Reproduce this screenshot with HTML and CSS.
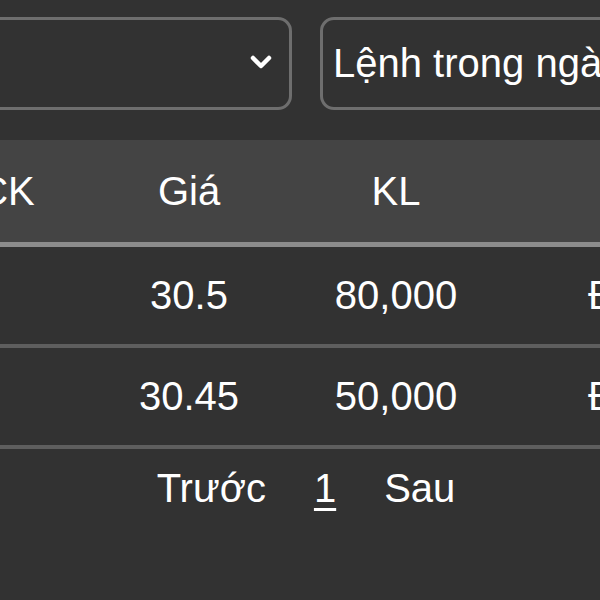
FILE: index.html
```html
<!DOCTYPE html>
<html lang="vi">
<head>
  <meta charset="UTF-8">
  <title>Sổ lệnh</title>
  <link rel="stylesheet" href="styles.css">
</head>
<body>

  <div class="order-page">
    <div class="filter-bar">
      <div class="select-box first">
        <span class="select-text"></span>
        <svg class="chevron" width="22" height="14" viewBox="0 0 22 14">
          <path d="M3 3 L11 11 L19 3" fill="none" stroke="#fff" stroke-width="4.5" stroke-linecap="round" stroke-linejoin="round"/>
        </svg>
      </div>
      <div class="select-box second">
        <span class="select-text">Lệnh trong ngày</span>
      </div>
    </div>

    <table class="order-table">
      <colgroup>
        <col class="col-ck">
        <col class="col-price">
        <col class="col-vol">
        <col class="col-status">
      </colgroup>
      <thead>
        <tr>
          <th>CK</th>
          <th>Giá</th>
          <th>KL</th>
          <th>Trạng thái</th>
        </tr>
      </thead>
      <tbody>
        <tr>
          <td class="symbol">SSI</td>
          <td>30.5</td>
          <td>80,000</td>
          <td class="status">Đã khớp</td>
        </tr>
        <tr>
          <td class="symbol">SSI</td>
          <td>30.45</td>
          <td>50,000</td>
          <td class="status">Đã khớp</td>
        </tr>
      </tbody>
    </table>

    <div class="pager">
      <span class="pager-link">Trước</span>
      <span class="pager-link current">1</span>
      <span class="pager-link">Sau</span>
    </div>
  </div>

</body>
</html>
```

FILE: styles.css
```css
html, body {
  margin: 0;
  height: 100%;
  background: #323232;
  overflow: hidden;
}

body {
  font-family: "Liberation Sans", Arial, sans-serif;
  color: #ffffff;
}

.order-page {
  width: 600px;
  overflow: hidden;
}

.filter-bar {
  display: flex;
  gap: 28px;
  padding-top: 17px;
  margin-left: -40px;
  margin-bottom: 30px;
  width: 700px;
}

.select-box {
  box-sizing: border-box;
  height: 93px;
  width: 332px;
  border: 3px solid #6e6e6e;
  border-radius: 14px;
  display: flex;
  align-items: center;
  padding: 0 10px;
  flex-shrink: 0;
}

.select-box.first {
  justify-content: flex-end;
  padding-right: 17px;
}

.select-text {
  font-size: 40px;
  white-space: nowrap;
}

.chevron {
  display: block;
  margin-top: -3px;
}

.order-table {
  border-collapse: collapse;
  table-layout: fixed;
  width: 970px;
  margin-left: -71px;
  font-size: 40px;
}

.col-ck { width: 156px; }
.col-price { width: 208px; }
.col-vol { width: 206px; }
.col-status { width: 400px; }

.order-table th {
  background: #444444;
  font-weight: normal;
  height: 102px;
  padding: 0;
  text-align: center;
  border-bottom: 5px solid #8c8c8c;
}

.order-table td {
  height: 97px;
  padding: 0;
  text-align: center;
  border-bottom: 4px solid #5e5e5e;
  white-space: nowrap;
}

.order-table td.symbol {
  text-align: left;
  padding-left: 0;
  text-indent: -70px;
}

.order-table td.status {
  text-align: left;
  padding-left: 89px;
}

.pager {
  display: flex;
  justify-content: center;
  gap: 48px;
  padding-top: 17px;
  padding-left: 12px;
  font-size: 40px;
}

.pager-link.current {
  text-decoration: underline;
  text-underline-offset: 6px;
  text-decoration-thickness: 3px;
}
```
